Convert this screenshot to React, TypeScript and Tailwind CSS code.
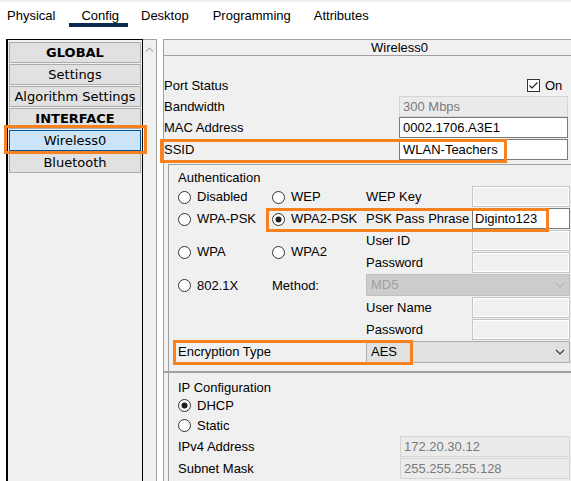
import React from "react";

const Radio = ({ checked = false }: { checked?: boolean }) => (
  <svg width="13" height="13" viewBox="0 0 13 13" className="shrink-0">
    <circle cx="6.5" cy="6.5" r="6" fill="#fff" stroke="#333" strokeWidth="1" />
    {checked && <circle cx="6.5" cy="6.5" r="3" fill="#1f1f1f" />}
  </svg>
);

const Chevron = ({ color }: { color: string }) => (
  <svg width="10" height="6" viewBox="0 0 10 6" className="shrink-0">
    <polyline points="1,1 5,5 9,1" fill="none" stroke={color} strokeWidth="1.1" />
  </svg>
);

const DisabledBox = () => (
  <div className="w-[98px] h-[21px] border border-[#c4c4c4] bg-[#f0f0f0] shadow-[inset_0_0_0_1px_#ffffff]" />
);

const RadioItem = ({ label, checked = false }: { label: string; checked?: boolean }) => (
  <div className="w-[94px] flex items-center">
    <Radio checked={checked} />
    <span className="ml-[6px]">{label}</span>
  </div>
);

const Orange = ({ cls }: { cls: string }) => (
  <div className={"absolute border-[3px] border-[#f7811f] pointer-events-none " + cls} />
);

export default function App() {
  const leftBtn =
    "h-[21px] w-[132px] border border-[#adadad] bg-[#e1e1e1] flex items-center justify-center leading-[19px]";
  return (
    <div className="relative w-[571px] h-[481px] overflow-hidden bg-white flex flex-col font-['Liberation_Sans',Arial,sans-serif] text-[13px] text-black">
      <div className="h-[2px] bg-[#f0f0f0] shrink-0" />
      {/* Tabs */}
      <div className="flex h-[25px] shrink-0 leading-[16px]">
        <div className="ml-[7px] pt-[6px]">Physical</div>
        <div className="ml-[14px] pl-[12px] pr-[9px] -mr-[9px] pt-[6px] h-[25px] border-b-4 border-[#0b2a4f]">Config</div>
        <div className="ml-[22px] pt-[6px]">Desktop</div>
        <div className="ml-[24px] pt-[6px]">Programming</div>
        <div className="ml-[23px] pt-[6px]">Attributes</div>
      </div>

      {/* Body */}
      <div className="flex flex-1 mt-[12px] min-h-0">
        {/* Left panel */}
        <div className="ml-[6px] w-[151px] flex shrink-0">
          <div className="w-[137px] border-t border-r border-l-2 border-black bg-[#f0f0f0] flex flex-col gap-[1px] pt-[2px] pl-[1px] font-['DejaVu_Sans',sans-serif] text-[13px]">
            <div className={leftBtn + " font-bold"}>GLOBAL</div>
            <div className={leftBtn}>Settings</div>
            <div className={leftBtn}>Algorithm Settings</div>
            <div className={leftBtn + " font-bold"}>INTERFACE</div>
            <div className="h-[21px] w-[132px] border border-[#005499] bg-[#cce4f7] flex items-center justify-center leading-[19px]">Wireless0</div>
            <div className={leftBtn}>Bluetooth</div>
          </div>
          <div className="w-[14px] border-t border-r border-[#a0a0a0] bg-[#f0f0f0] flex justify-center pt-[7px]">
            <svg width="9" height="5" viewBox="0 0 9 5">
              <polyline points="1,4.5 4.5,1 8,4.5" fill="none" stroke="#b0b0b0" strokeWidth="1.2" />
            </svg>
          </div>
        </div>

        {/* Main panel */}
        <div className="ml-[6px] w-[420px] shrink-0 border-l border-t border-[#a0a0a0] bg-[#f0f0f0] flex flex-col">
          <div className="h-[16px] border-b border-[#a0a0a0] leading-[15px] pl-[207px]">Wireless0</div>

          <div className="mt-[19px] h-[21px] flex items-center">
            <div className="w-[235px]">Port Status</div>
            <div className="ml-[128px] flex items-center">
              <svg width="13" height="13" viewBox="0 0 13 13">
                <rect x="0.5" y="0.5" width="12" height="12" fill="#fff" stroke="#333" />
                <polyline points="2.5,6.5 5,9 10.5,3.5" fill="none" stroke="#222" strokeWidth="1.2" />
              </svg>
              <span className="ml-[5px]">On</span>
            </div>
          </div>
          <div className="h-[21px] flex items-center">
            <div className="w-[235px]">Bandwidth</div>
            <div className="w-[169px] h-[21px] border border-[#d4d4d4] bg-[#ebebeb] text-[#7a7a7a] pl-[3px] leading-[19px]">300 Mbps</div>
          </div>
          <div className="h-[22px] flex items-start">
            <div className="w-[235px] leading-[21px]">MAC Address</div>
            <div className="w-[169px] h-[21px] border border-[#7a7a7a] bg-white pl-[3px] leading-[19px]">0002.1706.A3E1</div>
          </div>
          <div className="h-[22px] flex items-start">
            <div className="w-[235px] leading-[21px]">SSID</div>
            <div className="w-[169px] h-[21px] border border-[#7a7a7a] bg-white pl-[3px] leading-[19px]">WLAN-Teachers</div>
          </div>

          {/* Inner group */}
          <div className="mt-[3px] ml-[4px] flex-1 border-l border-t border-[#a0a0a0] flex flex-col">
            <div className="pl-[9px]">
              <div className="mt-[5px] h-[16px] leading-[16px]">Authentication</div>
              <div className="flex">
                <div className="w-[188px] flex flex-col">
                  <div className="h-[22px] flex items-center">
                    <RadioItem label="Disabled" />
                    <RadioItem label="WEP" />
                  </div>
                  <div className="h-[22px] flex items-center">
                    <RadioItem label="WPA-PSK" />
                    <RadioItem label="WPA2-PSK" checked />
                  </div>
                  <div className="h-[44px] flex items-center">
                    <RadioItem label="WPA" />
                    <RadioItem label="WPA2" />
                  </div>
                  <div className="h-[23px] flex items-center">
                    <RadioItem label="802.1X" />
                    <div className="w-[94px]">Method:</div>
                  </div>
                </div>
                <div className="w-[204px] flex flex-col">
                  <div className="h-[22px] flex items-start">
                    <div className="w-[106px] leading-[21px]">WEP Key</div>
                    <DisabledBox />
                  </div>
                  <div className="h-[22px] flex items-start">
                    <div className="w-[106px] leading-[21px] whitespace-nowrap">PSK Pass Phrase</div>
                    <div className="w-[98px] h-[21px] border border-[#7a7a7a] bg-white pl-[2px] leading-[19px]">Diginto123</div>
                  </div>
                  <div className="h-[22px] flex items-start">
                    <div className="w-[106px] leading-[21px]">User ID</div>
                    <DisabledBox />
                  </div>
                  <div className="h-[22px] flex items-start">
                    <div className="w-[106px] leading-[21px]">Password</div>
                    <DisabledBox />
                  </div>
                  <div className="h-[23px] flex items-start">
                    <div className="w-[204px] h-[22px] border border-[#bfbfbf] bg-[#cccccc] flex items-center justify-between pl-[4px] pr-[4px] text-[#a0a0a0]">
                      <span>MD5</span>
                      <Chevron color="#b5b5b5" />
                    </div>
                  </div>
                  <div className="h-[22px] flex items-start">
                    <div className="w-[106px] leading-[21px]">User Name</div>
                    <DisabledBox />
                  </div>
                  <div className="h-[22px] flex items-start">
                    <div className="w-[106px] leading-[21px]">Password</div>
                    <DisabledBox />
                  </div>
                </div>
              </div>
              <div className="h-[22px] flex items-start">
                <div className="w-[188px] leading-[21px]">Encryption Type</div>
                <div className="w-[204px] h-[22px] border border-[#adadad] bg-[#e1e1e1] flex items-center justify-between pl-[4px] pr-[4px]">
                  <span>AES</span>
                  <Chevron color="#333" />
                </div>
              </div>
            </div>
            <div className="mt-[8px] -ml-[5px] h-[2px] bg-[#a0a0a0]" />
            <div className="pl-[9px]">
              <div className="mt-[7px] h-[16px] leading-[16px]">IP Configuration</div>
              <div className="h-[19px] flex items-center">
                <Radio checked />
                <span className="ml-[6px]">DHCP</span>
              </div>
              <div className="h-[21px] flex items-center">
                <Radio />
                <span className="ml-[6px]">Static</span>
              </div>
              <div className="h-[22px] flex items-start">
                <div className="w-[222px] leading-[21px]">IPv4 Address</div>
                <div className="w-[170px] h-[21px] border border-[#d4d4d4] bg-[#ebebeb] text-[#7a7a7a] pl-[3px] leading-[19px]">172.20.30.12</div>
              </div>
              <div className="h-[22px] flex items-start">
                <div className="w-[222px] leading-[21px]">Subnet Mask</div>
                <div className="w-[170px] h-[21px] border border-[#d4d4d4] bg-[#ebebeb] text-[#7a7a7a] pl-[3px] leading-[19px]">255.255.255.128</div>
              </div>
            </div>
          </div>
        </div>
      </div>

      {/* Orange annotation boxes */}
      <Orange cls="left-[4px] top-[125px] w-[143px] h-[29px]" />
      <Orange cls="left-[160px] top-[139px] w-[347px] h-[24px]" />
      <Orange cls="left-[266px] top-[208px] w-[283px] h-[24px]" />
      <Orange cls="left-[173px] top-[340px] w-[240px] h-[25px]" />
    </div>
  );
}
